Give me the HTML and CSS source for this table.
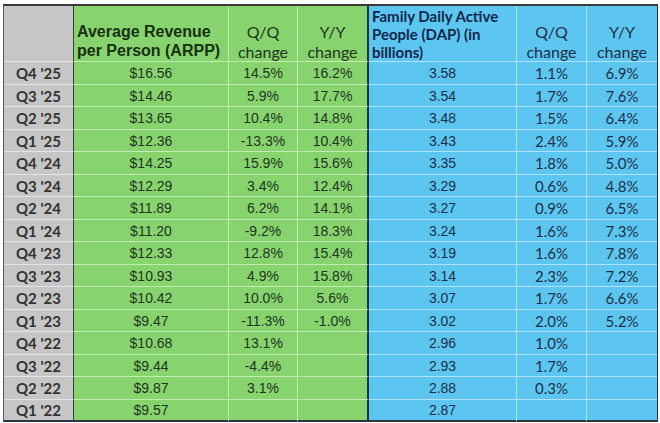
FILE: index.html
```html
<!DOCTYPE html>
<html>
<head>
<meta charset="utf-8">
<link rel="stylesheet" href="styles.css">
</head>
<body>
<div class="sheet">
  <div class="row head">
    <div></div>
    <div>Average Revenue<br>per Person (ARPP)</div>
    <div>Q/Q<br>change</div>
    <div>Y/Y<br>change</div>
    <div>Family Daily Active<br>People (DAP) (in<br>billions)</div>
    <div>Q/Q<br>change</div>
    <div>Y/Y<br>change</div>
  </div>
  <div class="row"><div>Q4 '25</div><div>$16.56</div><div>14.5%</div><div>16.2%</div><div>3.58</div><div>1.1%</div><div>6.9%</div></div>
  <div class="row"><div>Q3 '25</div><div>$14.46</div><div>5.9%</div><div>17.7%</div><div>3.54</div><div>1.7%</div><div>7.6%</div></div>
  <div class="row"><div>Q2 '25</div><div>$13.65</div><div>10.4%</div><div>14.8%</div><div>3.48</div><div>1.5%</div><div>6.4%</div></div>
  <div class="row"><div>Q1 '25</div><div>$12.36</div><div>-13.3%</div><div>10.4%</div><div>3.43</div><div>2.4%</div><div>5.9%</div></div>
  <div class="row"><div>Q4 '24</div><div>$14.25</div><div>15.9%</div><div>15.6%</div><div>3.35</div><div>1.8%</div><div>5.0%</div></div>
  <div class="row"><div>Q3 '24</div><div>$12.29</div><div>3.4%</div><div>12.4%</div><div>3.29</div><div>0.6%</div><div>4.8%</div></div>
  <div class="row"><div>Q2 '24</div><div>$11.89</div><div>6.2%</div><div>14.1%</div><div>3.27</div><div>0.9%</div><div>6.5%</div></div>
  <div class="row"><div>Q1 '24</div><div>$11.20</div><div>-9.2%</div><div>18.3%</div><div>3.24</div><div>1.6%</div><div>7.3%</div></div>
  <div class="row"><div>Q4 '23</div><div>$12.33</div><div>12.8%</div><div>15.4%</div><div>3.19</div><div>1.6%</div><div>7.8%</div></div>
  <div class="row"><div>Q3 '23</div><div>$10.93</div><div>4.9%</div><div>15.8%</div><div>3.14</div><div>2.3%</div><div>7.2%</div></div>
  <div class="row"><div>Q2 '23</div><div>$10.42</div><div>10.0%</div><div>5.6%</div><div>3.07</div><div>1.7%</div><div>6.6%</div></div>
  <div class="row"><div>Q1 '23</div><div>$9.47</div><div>-11.3%</div><div>-1.0%</div><div>3.02</div><div>2.0%</div><div>5.2%</div></div>
  <div class="row"><div>Q4 '22</div><div>$10.68</div><div>13.1%</div><div></div><div>2.96</div><div>1.0%</div><div></div></div>
  <div class="row"><div>Q3 '22</div><div>$9.44</div><div>-4.4%</div><div></div><div>2.93</div><div>1.7%</div><div></div></div>
  <div class="row"><div>Q2 '22</div><div>$9.87</div><div>3.1%</div><div></div><div>2.88</div><div>0.3%</div><div></div></div>
  <div class="row last"><div>Q1 '22</div><div>$9.57</div><div></div><div></div><div>2.87</div><div></div><div></div></div>
</div>
</body>
</html>
```
FILE: styles.css
```css
html, body {
  margin: 0;
  padding: 0;
  background: #ffffff;
}

body {
  padding: 4px 0 0 3px;
}

.sheet {
  display: grid;
  width: 655px;
  box-sizing: border-box;
  grid-template-columns: 70px 155px 69px 71px 148px 70px 70px;
  grid-template-rows: 56px repeat(8, 23px 22px);
  border-top: 2px solid #3a3a3a;
  border-left: 1px solid #5a5a5a;
  border-right: 1px solid #1e3550;
}

.row {
  display: contents;
}

.row > div {
  box-sizing: border-box;
  display: flex;
  align-items: center;
  justify-content: center;
  font-family: "Liberation Sans", Arial, sans-serif;
  font-size: 14px;
  white-space: nowrap;
}

/* label column */
.row > div:nth-child(1) {
  background: #c6c6c6;
  border-right: 1px solid #3c3c3c;
  border-bottom: 1px solid #e4e4e4;
  font-family: Lato, "Liberation Sans", sans-serif;
  font-weight: 700;
  font-size: 15px;
  color: #333333;
}

/* green section */
.row > div:nth-child(2),
.row > div:nth-child(3),
.row > div:nth-child(4) {
  background: #87d46f;
  border-right: 1px solid #c4eab6;
  border-bottom: 1px solid #c4eab6;
  color: #22331e;
}

.row > div:nth-child(4) {
  border-right: 2px solid #1c3448;
}

/* blue section */
.row > div:nth-child(5),
.row > div:nth-child(6),
.row > div:nth-child(7) {
  background: #5cc6f1;
  border-right: 1px solid #b2e2f6;
  border-bottom: 1px solid #b2e2f6;
  color: #1c2f46;
}

.row > div:nth-child(6),
.row > div:nth-child(7) {
  font-family: Lato, "Liberation Sans", sans-serif;
  font-size: 15px;
}

.row > div:nth-child(7) {
  border-right: none;
}

.row.last > div {
  border-bottom: 2px solid #2a3442;
}

/* header row */
.head > div {
  align-items: flex-end;
  padding-bottom: 1px;
}

.head > div:nth-child(2),
.head > div:nth-child(5) {
  justify-content: flex-start;
  text-align: left;
  font-weight: 700;
  padding-left: 3px;
}

.head > div:nth-child(2) {
  font-size: 16px;
  color: #173012;
  line-height: 18.5px;
  padding-bottom: 1px;
}

.head > div:nth-child(5) {
  font-family: Lato, "Liberation Sans", sans-serif;
  font-size: 15px;
  color: #10264a;
  line-height: 18px;
  padding-bottom: 0;
}

.head > div:nth-child(3),
.head > div:nth-child(4),
.head > div:nth-child(6),
.head > div:nth-child(7) {
  font-family: Lato, "Liberation Sans", sans-serif;
  font-size: 16px;
  text-align: center;
  line-height: 19.5px;
  padding-bottom: 0;
}
```
